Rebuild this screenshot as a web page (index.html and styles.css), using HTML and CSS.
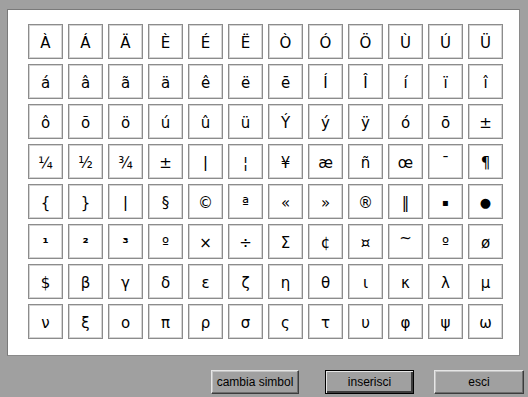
FILE: index.html
```html
<!DOCTYPE html>
<html lang="it">
<head>
    <meta charset="UTF-8">
    <title>Simboli</title>
    <link rel="stylesheet" href="styles.css">
</head>
<body>
    <div class="panel">
        <div class="grid">
            <div class="cell">À</div><div class="cell">Á</div><div class="cell">Ä</div><div class="cell">È</div><div class="cell">É</div><div class="cell">Ë</div>
            <div class="cell">Ò</div><div class="cell">Ó</div><div class="cell">Ö</div><div class="cell">Ù</div><div class="cell">Ú</div><div class="cell">Ü</div>

            <div class="cell">á</div><div class="cell">â</div><div class="cell">ã</div><div class="cell">ä</div><div class="cell">ê</div><div class="cell">ë</div>
            <div class="cell">ē</div><div class="cell">Í</div><div class="cell">Î</div><div class="cell">í</div><div class="cell">ï</div><div class="cell">î</div>

            <div class="cell">ô</div><div class="cell">õ</div><div class="cell">ö</div><div class="cell">ú</div><div class="cell">û</div><div class="cell">ü</div>
            <div class="cell">Ý</div><div class="cell">ý</div><div class="cell">ÿ</div><div class="cell">ó</div><div class="cell">ō</div><div class="cell">±</div>

            <div class="cell">¼</div><div class="cell">½</div><div class="cell">¾</div><div class="cell">±</div><div class="cell tall">|</div><div class="cell">¦</div>
            <div class="cell">¥</div><div class="cell">æ</div><div class="cell">ñ</div><div class="cell">œ</div><div class="cell">¯</div><div class="cell">¶</div>

            <div class="cell">{</div><div class="cell">}</div><div class="cell tall">|</div><div class="cell">§</div><div class="cell">©</div><div class="cell">ª</div>
            <div class="cell">«</div><div class="cell">»</div><div class="cell">®</div><div class="cell">‖</div><div class="cell square">▪</div><div class="cell dot">●</div>

            <div class="cell small">¹</div><div class="cell small">²</div><div class="cell small">³</div><div class="cell">º</div><div class="cell">×</div><div class="cell">÷</div>
            <div class="cell">Σ</div><div class="cell">¢</div><div class="cell">¤</div><div class="cell high">~</div><div class="cell">º</div><div class="cell">ø</div>

            <div class="cell">$</div><div class="cell">β</div><div class="cell">γ</div><div class="cell">δ</div><div class="cell">ε</div><div class="cell">ζ</div>
            <div class="cell">η</div><div class="cell">θ</div><div class="cell">ι</div><div class="cell">κ</div><div class="cell">λ</div><div class="cell">μ</div>

            <div class="cell">ν</div><div class="cell">ξ</div><div class="cell">ο</div><div class="cell">π</div><div class="cell">ρ</div><div class="cell">σ</div>
            <div class="cell">ς</div><div class="cell">τ</div><div class="cell">υ</div><div class="cell">φ</div><div class="cell">ψ</div><div class="cell">ω</div>
        </div>
    </div>
    <div class="buttons">
        <button class="btn btn-change">cambia simbol</button>
        <button class="btn btn-insert">inserisci</button>
        <button class="btn btn-exit">esci</button>
    </div>
</body>
</html>
```

FILE: styles.css
```css
body {
    margin: 0;
    padding: 0;
    background-color: #a0a0a0;
    font-family: "DejaVu Sans", Verdana, sans-serif;
    width: 528px;
    height: 397px;
    overflow: hidden;
}

.panel {
    margin: 9px 0 0 7px;
    width: 511px;
    height: 345px;
    background-color: #fff;
    border: 1px solid #7a7a7a;
    border-right-color: #8a8a8a;
    border-bottom-color: #8a8a8a;
}

.grid {
    display: grid;
    grid-template-columns: repeat(12, 35px);
    grid-auto-rows: 35px;
    gap: 5px;
    padding: 14px 0 0 20px;
}

.cell {
    box-sizing: border-box;
    border: 1px solid #8c8c8c;
    box-shadow: inset 0 0 0 1px #d4d4d4;
    display: flex;
    justify-content: center;
    align-items: center;
    font-size: 15px;
    color: #000;
    padding-top: 2px;
}

.cell.tall {
    font-size: 17px;
    font-family: "Liberation Sans", sans-serif;
}

.cell.small {
    font-size: 14px;
    font-weight: bold;
}

.cell.square {
    font-size: 10px;
}

.cell.dot {
    font-size: 13px;
}

.cell.high {
    align-items: flex-start;
    padding-top: 4px;
}

.buttons {
    display: flex;
    margin-top: 14px;
    padding-left: 211px;
}

.btn {
    box-sizing: border-box;
    height: 24px;
    background-color: #a0a0a0;
    font-family: "Liberation Sans", Arial, sans-serif;
    font-size: 12px;
    color: #000;
    border: 1px solid;
    border-color: #e6e6e6 #3c3c3c #3c3c3c #e6e6e6;
    box-shadow: inset -1px -1px 0 #6e6e6e, inset 1px 1px 0 #c4c4c4;
    padding: 0;
}

.btn-change {
    width: 88px;
}

.btn-insert {
    width: 89px;
    margin-left: 26px;
    border: 1px solid #000;
    box-shadow: inset 1px 1px 0 #e6e6e6, inset -2px -2px 0 #3c3c3c;
}

.btn-exit {
    width: 90px;
    margin-left: 20px;
}
```
